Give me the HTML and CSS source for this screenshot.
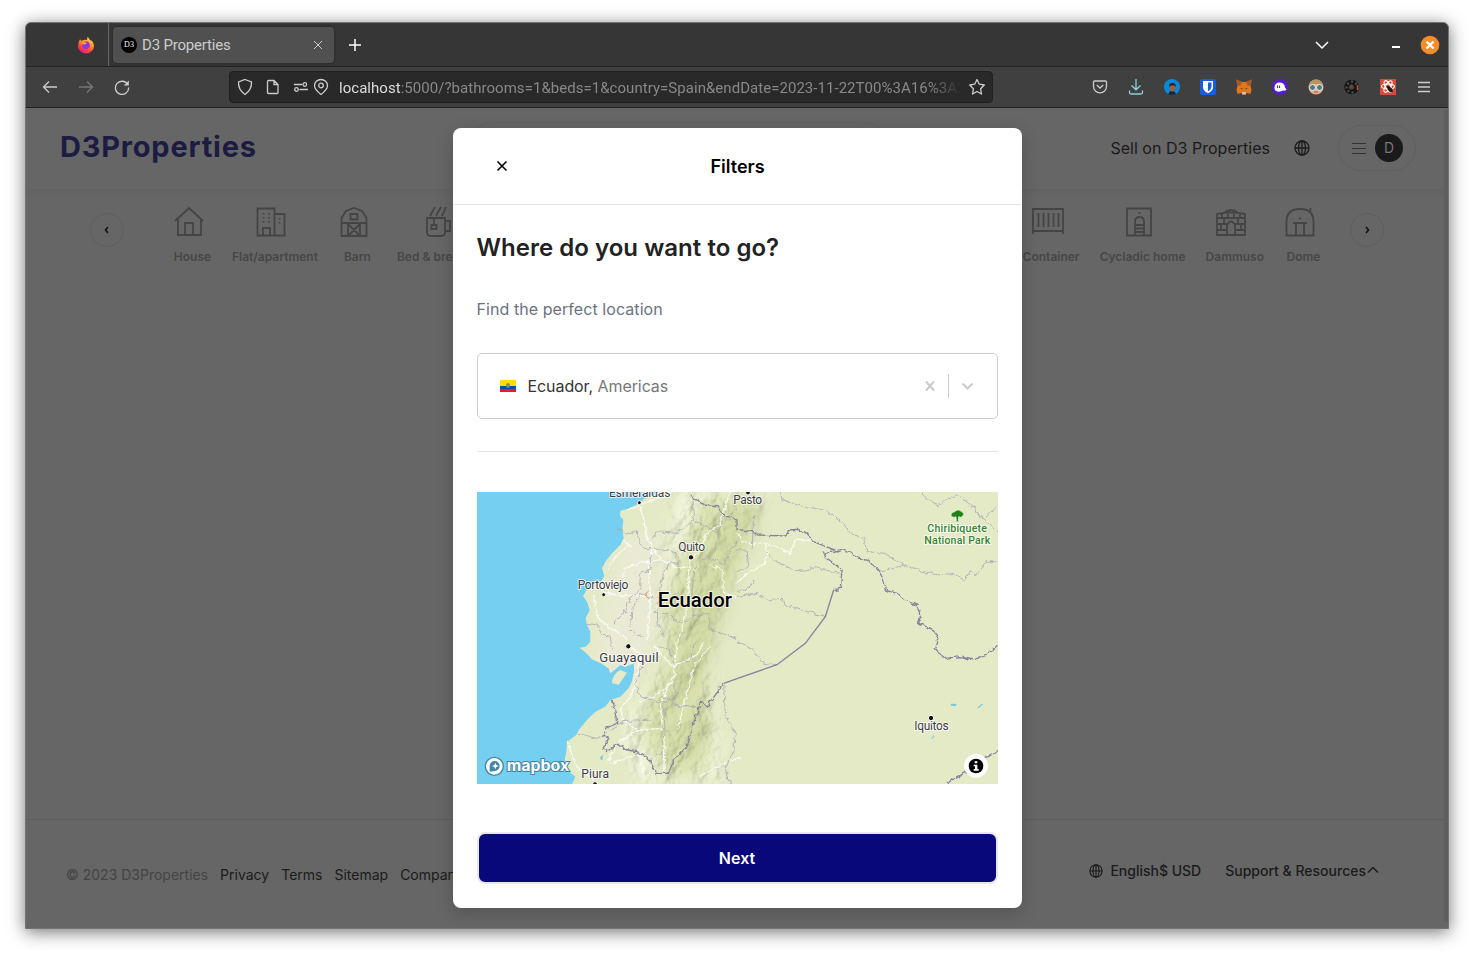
FILE: index.html
```html
<!DOCTYPE html>
<html lang="en">
<head>
<meta charset="utf-8">
<title>D3 Properties</title>
<link rel="stylesheet" href="styles.css">
</head>
<body>
<div class="window">
  <div class="tabbar">
    <div class="pinned">
      <svg width="18" height="18" viewBox="0 0 18 18">
        <defs><linearGradient id="fx" x1="0.8" y1="0" x2="0.3" y2="1"><stop offset="0" stop-color="#ffe545"/><stop offset=".45" stop-color="#ff8a28"/><stop offset=".75" stop-color="#ff3b47"/><stop offset="1" stop-color="#e5168c"/></linearGradient></defs>
        <path d="M3 3.2 4.5 5Q7 3 10 4L10.5.8Q12 2 13 4L15 5Q17 7 17 10A8 7.6 0 0 1 1 10Q1 6 3 3.2Z" fill="url(#fx)"/>
        <circle cx="9" cy="9.3" r="3.8" fill="#8a35e8"/><path d="M4.5 6.5Q8 5 10 7.5L7.5 8.5Q5.500 9 4.500 6.500Z" fill="#ffa52b"/>
      </svg>
    </div>
    <div class="tab">
      <span class="favicon">D3</span>
      <span class="tab-title">D3 Properties</span>
      <svg width="16" height="16" viewBox="0 0 16 16" class="ln thin"><path d="M4 4l8 8M12 4l-8 8"/></svg>
    </div>
    <svg class="ln plus" width="16" height="16" viewBox="0 0 16 16"><path d="M8 2v12M2 8h12"/></svg>
    <div class="controls">
      <svg class="ln chev" width="16" height="16" viewBox="0 0 16 16"><path d="M2 5l6 6 6-6"/></svg>
      <span class="minimize"></span>
      <svg width="20" height="20" viewBox="0 0 20 20"><circle cx="10" cy="10" r="9.300" fill="#f28d2c"/><path d="M6.500 6.500l7 7M13.500 6.500l-7 7" stroke="#fff" stroke-width="2.400"/></svg>
    </div>
  </div>
  <div class="navbar">
    <div class="nav-buttons">
      <svg class="ln" width="16" height="16" viewBox="0 0 16 16"><path d="M15 8H1.500M7 2.500L1.500 8 7 13.500"/></svg>
      <svg class="ln off" width="16" height="16" viewBox="0 0 16 16"><path d="M1 8h13.500M9 2.500L14.500 8 9 13.500"/></svg>
      <svg class="ln" width="16" height="16" viewBox="0 0 16 16"><path d="M13.700 5.500A6.600 6.600 0 1 0 14.600 8.500"/><path d="M14.800 1.500v5h-5z" fill="#ccc" stroke="none"/></svg>
    </div>
    <div class="urlbar">
      <svg class="ln shield" width="16" height="18" viewBox="0 0 16 18"><path d="M8 1.500L14.500 4Q15 11.500 8 16.500 1 11.500 1.500 4Z"/></svg>
      <svg class="ln doc" width="14" height="16" viewBox="0 0 14 16"><path d="M2.500 1.500h5.500l4 4v8q0 1-1 1h-8.500q-1 0-1-1v-11q0-1 1-1zM8 1.500v4h4"/></svg>
      <svg class="ln toggles" width="16" height="16" viewBox="0 0 16 16"><path d="M1 5.500h8M6.500 10.500H15"/><circle cx="11.800" cy="5.500" r="1.800"/><circle cx="3.500" cy="10.500" r="1.800"/></svg>
      <svg class="ln pin" width="16" height="18" viewBox="0 0 16 18"><path d="M8 16.500Q1.500 11.500 1.500 7.500a6.500 6 0 0 1 13 0Q14.500 11.500 8 16.500Z"/><circle cx="8" cy="7.500" r="2.300"/></svg>
      <span class="url"><b>localhost</b>:5000/?bathrooms=1&amp;beds=1&amp;country=Spain&amp;endDate=2023-11-22T00%3A16%3A2</span>
      <svg class="ln" width="18" height="18" viewBox="0 0 18 18"><path d="M9 1.500l2.300 4.700 5 .8-3.700 3.700.9 5.300L9 13.500 4.500 16l.9-5.300L1.700 7l5-.8z" stroke-linejoin="round"/></svg>
    </div>
    <div class="extensions">
      <span><svg class="ln" width="16" height="16" viewBox="0 0 16 16"><path d="M2.500 2h11q1 0 1 1v4.500a6.500 6.300 0 0 1-13 0V3q0-1 1-1z"/><path d="M4.800 6l3.200 3 3.200-3"/></svg></span>
      <span><svg class="ln teal" width="16" height="16" viewBox="0 0 16 16"><path d="M8 0v10.500M3.500 6.500L8 10.800l4.500-4.300M1.500 11.500v2q0 1.500 1.500 1.500h10q1.500 0 1.500-1.500v-2"/></svg></span>
      <span><svg width="16" height="16" viewBox="0 0 16 16"><circle cx="8" cy="8" r="8" fill="#0788d8"/><path d="M4.500 16Q4.500 12 8 12t4 3.500Z" fill="#20222c"/><ellipse cx="8.500" cy="8.800" rx="2.800" ry="3.700" fill="#9c5f42"/><path d="M5 8Q4.500 4 8.500 4T11.500 8L10.500 6.500H6.500Z" fill="#2e2021"/></svg></span>
      <span><svg width="16" height="16" viewBox="0 0 16 16"><rect width="16" height="16" rx="2" fill="#175ddc"/><path d="M3 2h10v6q0 4-5 6.300Q3 12 3 8z" fill="#fff"/><path d="M8 3.500h3.500V8q0 2.500-3.500 4.600z" fill="#175ddc"/></svg></span>
      <span><svg width="16" height="16" viewBox="0 0 16 16"><path d="M.5.500L6 3h4L15.500.5l-.8 7L15.500 11l-1 4-3.500-1-2 1.500H7L5 14l-3.500 1-1-4 .8-3.500z" fill="#e2761b"/><path d="M.5.500L6 3.500 4.500 6.500 1 7zM15.500.5L10 3.500l1.500 3L15 7z" fill="#a35a28"/><path d="M6 13h4v2.500H6z" fill="#d5bfb2"/><path d="M4 9l2.500.5V10.500zM12 9l-2.500.5V10.500z" fill="#2a3344"/></svg></span>
      <span><svg width="16" height="16" viewBox="0 0 16 16"><circle cx="8" cy="8" r="8" fill="#551bcf"/><path d="M2.500 9Q2.500 3.500 7.500 3.500T13 8.500l1.500 2Q14 12 11 11.500 8.500 13 5.500 12.500 2.500 12 2.500 9Z" fill="#fff"/><path d="M5.500 6.500v2.500M7.500 6.500v2.500" stroke="#4f22bd" stroke-width="1.100"/></svg></span>
      <span><svg width="16" height="16" viewBox="0 0 16 16"><circle cx="8" cy="8" r="7.500" fill="#e9b090"/><path d="M1 8Q1 .5 8 .5T15 8L12 5H4z" fill="#b79561"/><circle cx="4.500" cy="8.500" r="3" fill="#477b87" stroke="#e8efed"/><circle cx="11.500" cy="8.500" r="3" fill="#477b87" stroke="#e8efed"/><path d="M6 13h4" stroke="#a45742"/></svg></span>
      <span><svg width="16" height="16" viewBox="0 0 16 16"><circle cx="7.500" cy="8" r="5" fill="none" stroke="#141414" stroke-width="4.500"/><g fill="#4b4b4b"><circle cx="4" cy="4.500" r="1.200"/><circle cx="8" cy="2.500" r="1.200"/><circle cx="2.500" cy="8.500" r="1.200"/><circle cx="4.500" cy="12" r="1.200"/><circle cx="8.500" cy="13.500" r="1.200"/><circle cx="12" cy="4.500" r="1.200"/></g><circle cx="7.500" cy="8" r="1.500" fill="#7a421f"/><path d="M13.500 6v5" stroke="#b9552a" stroke-width="1.600"/></svg></span>
      <span><svg width="16" height="16" viewBox="0 0 16 16"><rect width="16" height="16" fill="#d94a38"/><g fill="none" stroke="#fff" stroke-width="1.100"><ellipse cx="8" cy="7.500" rx="6.500" ry="2.500"/><ellipse cx="8" cy="7.500" rx="6.500" ry="2.500" transform="rotate(60 8 7.500)"/><ellipse cx="8" cy="7.500" rx="6.500" ry="2.500" transform="rotate(120 8 7.500)"/></g><path d="M6.500 7l2.500 0 3.500 3 .5 3-2.500.5-2.500-2.500z" fill="#2a1515"/></svg></span>
      <span><svg class="ln" width="16" height="16" viewBox="0 0 16 16"><path d="M2 3.500h12M2 8h12M2 12.500h12"/></svg></span>
    </div>
  </div>

  <div class="page">
    <header class="site-header">
      <div class="logo">D3Properties</div>
      <div class="searchbar"></div>
      <div class="header-right">
        <span class="sell">Sell on D3 Properties</span>
        <svg class="globe" width="16" height="16" viewBox="0 0 16 16"><circle cx="8" cy="8" r="7"/><ellipse cx="8" cy="8" rx="3.500" ry="7"/><path d="M8 1v14M1 8h14"/></svg>
        <div class="user"><svg width="16" height="16" viewBox="0 0 16 16"><path d="M1 3.500h14M1 8.500h14M1 13.500h14" stroke="#333" stroke-width="1.200"/></svg><span class="avatar">D</span></div>
      </div>
    </header>
    <div class="categories">
      <span class="arrow"><svg width="10" height="10" viewBox="0 0 10 10"><path d="M6 2L3.500 5 6 8"/></svg></span>
      <div class="cats cats-start">
        <div class="cat"><svg viewBox="0 0 32 32"><path d="M2 15L16 2l14 13M5 13v16h23V13M12 29V17h8v12"/></svg>House</div>
        <div class="cat"><svg viewBox="0 0 32 32"><path d="M2.500 2.500h17v27h-17zM19.500 8h10v21.500h-10M8 29v-7h7v7"/><path stroke-dasharray="1.500 2.500" d="M8.500 7v12M14 7v12M24.500 12v8"/></svg>Flat/apartment</div>
        <div class="cat"><svg viewBox="0 0 32 32"><path d="M3.500 30V12L8 5l8-3 8 3 4.500 7v18zM3.500 17h25M12.500 8h7v5.500h-7zM10 17v13M22 17v13M10 18l12 12M22 18L10 30"/></svg>Barn</div>
        <div class="cat"><svg viewBox="0 0 32 32"><path d="M4 12h18v14q0 4-4 4H8q-4 0-4-4zM22 15h5v10h-5M11 12v7M8.500 19h5v4h-5zM7 10l5-9M13 10l5-9M19 10l4-9"/></svg>Bed &amp; breakfast</div>
      </div>
      <div class="cats cats-end">
        <div class="cat"><svg viewBox="0 0 32 32"><path d="M1 28V3h30v25M1 25h30M6.500 7v14M11.500 7v14M16.500 7v14M21.500 7v14M26.500 7v14"/></svg>Container</div>
        <div class="cat"><svg viewBox="0 0 32 32"><path d="M4 2.500h24v27H4zM12 29V16q0-5 4.500-5t4.500 5v13M12 19h9M12 22.500h9M12 26h9M16.500 6v2"/></svg>Cycladic home</div>
        <div class="cat"><svg viewBox="0 0 32 32"><path d="M2 29V8l7-1q7-6 14 0l7 1v21zM2 8q14-3 28 0M2 12h28M2 18h10M20 18h10M2 24h10M20 24h10M7 8v4M13 8v4M19 8v4M25 8v4M9 12v6M23 12v6M6 18v6M26 18v6M12 29V19q4-7 8 0v10"/></svg>Dammuso</div>
        <div class="cat"><svg viewBox="0 0 32 32"><path d="M2.500 29.500V16q0-13 13.500-13 13.500 0 13.500 13v13.500zM26.500 8V2M9 17h14M12 17v12M20 17v12M16 11.500v2"/></svg>Dome</div>
      </div>
      <span class="arrow"><svg width="10" height="10" viewBox="0 0 10 10"><path d="M4 2l2.500 3L4 8"/></svg></span>
    </div>
    <footer class="footer">
      <div class="links"><span class="copy">© 2023 D3Properties</span><span>Privacy</span><span>Terms</span><span>Sitemap</span><span>Company</span></div>
      <div class="locale">
        <svg class="globe" width="14" height="14" viewBox="0 0 16 16"><circle cx="8" cy="8" r="7"/><ellipse cx="8" cy="8" rx="3.500" ry="7"/><path d="M8 1v14M1 8h14"/></svg>
        <span class="lang">English$ USD</span><span class="support">Support &amp; Resources</span>
        <svg class="globe" width="12" height="14" viewBox="0 0 12 14"><path d="M1 8.500l5-5 5 5"/></svg>
      </div>
    </footer>
    <i class="scrollbar"></i>

    <div class="overlay">
      <section class="modal">
        <div class="modal-head">
          <svg class="close" width="12" height="12" viewBox="0 0 12 12"><path d="M1.500 1.500l9 9M10.500 1.500l-9 9"/></svg>
          <span class="filters">Filters</span>
        </div>
        <div class="modal-body">
          <h2>Where do you want to go?</h2>
          <p>Find the perfect location</p>
          <div class="select">
            <svg width="16" height="12" viewBox="0 0 16 12"><rect width="16" height="12" rx="1" fill="#ffdd00"/><path d="M0 6h16v6H0z" fill="#034ea2"/><path d="M0 9h16v2q0 1-1 1H1q-1 0-1-1z" fill="#ed1c24"/><ellipse cx="8" cy="5.500" rx="2" ry="2.500" fill="#8a8252"/><circle cx="8" cy="5.800" r="1" fill="#63aab5"/></svg>
            <span class="value">Ecuador, <em>Americas</em></span>
            <svg class="grey" width="12" height="12" viewBox="0 0 12 12"><path d="M2 1.500l8 9M10 1.500l-8 9"/></svg>
            <i class="sep"></i>
            <svg class="grey" width="14" height="12" viewBox="0 0 14 12"><path d="M1.500 3.500l5 5 5-5"/></svg>
          </div>
          <hr>
          <svg class="map" width="521" height="292" viewBox="0 6 1563 876">
            <defs>
              <filter id="relief" x="0" y="0" width="100%" height="100%">
                <feTurbulence type="fractalNoise" baseFrequency=".019 .014" numOctaves="4" seed="12" result="n"/>
                <feDiffuseLighting in="n" surfaceScale="14" lighting-color="#f3f5e2" diffuseConstant="1.150" result="l"><feDistantLight azimuth="205" elevation="60"/></feDiffuseLighting>
                <feGaussianBlur in="SourceAlpha" stdDeviation="24" result="a"/>
                <feComposite in="l" in2="a" operator="in"/>
              </filter>
              <filter id="soft" x="-20%" y="-20%" width="140%" height="140%"><feGaussianBlur stdDeviation="25"/></filter>
              <filter id="jag" x="-5%" y="-5%" width="110%" height="110%"><feTurbulence type="fractalNoise" baseFrequency=".07" numOctaves="2" seed="3"/><feDisplacementMap in="SourceGraphic" scale="16" xChannelSelector="R" yChannelSelector="G"/></filter>
              <clipPath id="land"><path id="coast" d="M560 0L500 28 487 40 457 55 430 63 429 78 439 90 436 120 440 145 430 165 405 190 385 215 375 235 382 258 372 275 335 290 318 318 330 335 338 360 326 385 330 405 340 425 340 455 326 470 308 473 328 490 345 508 372 520 395 535 400 550 430 525 445 530 470 520 472 540 465 575 455 595 430 620 400 630 385 650 355 665 330 690 305 720 298 735 270 755 268 785 263 810 270 840 295 860 285 882 1563 882V0Z"/></clipPath>
            </defs>
            <rect y="0" width="1563" height="882" fill="#75cff0"/>
            <use href="#coast" fill="#e4eac6"/>
            <g clip-path="url(#land)">
              <path d="M440 140L540 130 560 400 500 560 440 620 350 500Z" fill="#eaead4" filter="url(#soft)"/>
              <path d="M680 20H860L830 130 780 250 735 400 700 520 700 700 690 860H560L500 740 500 650 560 520 570 340 600 230Z" fill="#d9e0b4" filter="url(#soft)"/>
              <path d="M600 0H890L820 130 770 250 725 400 700 520 725 700 740 882H480L430 740 470 640 550 520 540 340 570 150Z" filter="url(#relief)" opacity=".58" class="multiply"/>
              <path d="M845 30L790 130 745 230 720 330 690 410 660 500 630 590M690 680L640 780" fill="none" stroke="#aebb75" stroke-width="36" opacity=".32" filter="url(#soft)"/>
            </g>
            <path d="M405 580Q405 552 430 540L450 548 435 570 425 584Z" fill="#e6eac9"/>
            <path d="M370 800l8-4-2 14-6-2z" fill="#6cc9ed"/>
            <g class="roads" filter="url(#jag)">
              <path d="M487 40L500 90 510 140 525 175 555 208 600 235 640 230M436 150L460 165 420 195 390 240M525 175L515 230 520 320 515 400 510 450M372 275L380 310 430 315 515 318M440 280L440 240 480 220 555 208M350 315L360 380 400 415 450 445M640 205L632 330 620 400 600 460 590 560 550 640 555 700M690 130L670 180 640 205M700 225L735 240 740 310 780 320M455 470L490 490 480 560 465 610 430 655 440 690 480 720 560 715M530 470L590 530 650 500 680 460M480 720L420 760 390 820M270 755L300 830 350 870M400 820L490 790 500 860M560 850L565 740"/>
              <path d="M780 130L805 160 865 160 870 185 865 220 810 250 780 280M870 160L940 188 955 150 1010 155M700 470L650 530 630 610 600 720M670 860L720 830 790 800M490 640L560 600 600 550M600 0L540 25 450 60M690 130L730 100 760 0"/>
            </g>
            <g class="minor" filter="url(#jag)">
              <path d="M410 119H436L445 135 480 122 485 150 500 175 580 180 610 205 605 225 580 218 560 245 545 320 540 400 560 440M525 145L540 125 600 130 650 90 645 30M520 195V240L490 250 488 300 455 330 440 370 410 400M650 240L645 310 650 380 610 400 570 370 530 370M650 90L690 110 720 130 740 90 780 60M330 400L360 405 375 435 400 440 405 480M465 360L490 310 530 325M465 360L460 420 500 440M545 470L580 480 590 520 640 510 660 450M500 520L475 580 490 620 560 640 565 740M560 640L600 620 590 580M520 690L440 695 420 705M560 740L550 790 520 810M300 733L360 745 420 710M650 240L690 200 740 220 780 150M645 380L690 370 700 420 780 445M660 650L610 650 560 620M740 580L745 670 775 730 770 790 745 830 760 882"/>
              <path d="M830 80L825 180M910 0V25L960 45 1040 60 1090 90 1120 130 1160 145 1170 185 1220 190 1280 225 1340 245 1385 255 1430 250 1460 270 1480 245 1500 255 1525 215H1563M1330 0L1345 25 1385 45 1410 25 1440 15 1480 40 1510 80 1563 125M1525 80L1563 48M1205 245L1280 226M780 456L830 480 860 520 900 524M865 185L890 210 950 240 995 245 1000 230 1090 250M780 310L820 290 830 270M780 320L840 310 870 330 915 325 920 345 1045 380M780 180L810 180 815 230 780 245"/>
            </g>
            <g class="borders">
              <path filter="url(#jag)" d="M640 15L680 45 720 50 740 75 780 90 780 118 830 125 840 135 930 138 935 120 960 118 990 130 1010 155 1085 185 1040 190 1045 200 1095 240 1090 295 1070 300M740 580L690 650 670 635 650 700 630 770 590 810 575 850 540 850 510 800 480 785 450 780 420 760 390 785 378 775 395 745 378 730 385 715 420 700 410 640 400 633M1085 185L1100 178 1150 205 1170 210 1200 235 1215 260 1225 300 1260 310 1280 330 1320 345 1330 380 1325 400 1370 420 1385 450 1375 475 1385 490 1405 505 1450 500 1490 510 1530 495 1545 480 1563 465M1410 882L1430 865 1470 845 1520 805 1563 785"/>
              <path d="M1070 300L1045 380 985 460 900 524 780 566 740 580"/>
            </g>
            <path d="M1422 641l17 1-2 5-14 1zM1500 655l14-13 5 0-13 12zM1360 740l5 5 6-13v8l-6 7z" fill="#6cc9ed"/>
            <path d="M515 305l-7 3-2 10 10 8" fill="none" stroke="#ee9b55" stroke-width="3"/>
            <g fill="#111" stroke="#fff" stroke-width="3"><circle cx="487" cy="38" r="6"/><circle cx="642" cy="202" r="8"/><circle cx="380" cy="314" r="6"/><circle cx="454" cy="469" r="8"/><circle cx="354" cy="882" r="7"/><circle cx="813" cy="8" r="7"/><circle cx="1362" cy="684" r="8"/></g>
            <g class="labels">
              <text x="396" y="21" textLength="184">Esmeraldas</text>
              <text x="769" y="42" textLength="86">Pasto</text>
              <text x="604" y="183" textLength="80">Quito</text>
              <text x="302" y="298" textLength="152">Portoviejo</text>
              <text class="city" x="367" y="516" textLength="178">Guayaquil</text>
              <text x="313" y="863" textLength="83">Piura</text>
              <text x="1312" y="721" textLength="103">Iquitos</text>
              <text class="country" x="542" y="350" textLength="223" lengthAdjust="spacingAndGlyphs">Ecuador</text>
              <g class="park"><text x="1351" y="127" textLength="179">Chiribiquete</text><text x="1342" y="163" textLength="198">National Park</text></g>
            </g>
            <path d="M1422 76Q1422 66 1433 65 1443 55 1452 64 1464 68 1458 78 1450 85 1445 80L1444 92 1449 95H1433L1438 92 1437 80Q1426 85 1422 76Z" fill="#218017" stroke="#f3f6df" stroke-width="2"/>
            <circle cx="52" cy="829" r="27" fill="#fff" fill-opacity=".95" stroke="#4385a3" stroke-width="4"/>
            <path d="M38 845V828a15 15 0 1 1 15 15z" fill="#4385a3"/><path d="M55 818l3 7 7 3-7 3-3 7-3-7-7-3 7-3z" fill="#fff"/>
            <text class="mapbox" x="89" y="843" textLength="188" lengthAdjust="spacingAndGlyphs">mapbox</text>
            <circle cx="1497" cy="827" r="36" fill="#fff" fill-opacity=".93"/><circle cx="1497" cy="828" r="22"/>
            <path d="M1493 814h8v6h-8zM1490 824h11v13h4v5h-15v-5h4v-8h-4z" fill="#fff"/>
          </svg>
          <button class="next">Next</button>
        </div>
      </section>
    </div>
  </div>
</div>
</body>
</html>
```

FILE: styles.css
```css
* { box-sizing: border-box; }
body { margin: 0; padding: 22px 25px; background: #fff; font-family: Inter, sans-serif; }
svg { display: block; flex: none; }
.window { width: 1424px; height: 907px; display: flex; flex-direction: column; border: 1px solid #747474; border-radius: 6px 6px 0 0; overflow: hidden; background: #666; box-shadow: 0 3px 17px rgba(0, 0, 0, .55); }
.ln { fill: none; stroke: #ccc; stroke-width: 1.3; }
.ln.off { stroke: #777; }
.ln.teal { stroke: #8bd5d6; }
.ln.thin { stroke-width: 1; }

.tabbar { height: 44px; flex: none; display: flex; align-items: center; background: #363636; border-bottom: 1px solid #222; font-family: Roboto, sans-serif; }
.pinned { width: 83px; height: 43px; padding: 13px 0 0 51px; border-right: 1px solid #666; }
.tab { width: 221px; height: 36px; margin-left: 4px; padding: 0 8px; display: flex; align-items: center; border-radius: 4px; background: #505050; box-shadow: 0 0 3px #222; }
.favicon { width: 16px; height: 16px; border-radius: 50%; background: #000; color: #fff; font: 8px/16px "Liberation Serif", serif; text-align: center; }
.tab-title { flex: 1; padding-left: 5px; font-size: 15px; color: #ccc; letter-spacing: -.2px; }
.plus { margin-left: 13px; stroke: #fff; stroke-width: 1.5; }
.controls { margin-left: auto; padding-right: 8px; display: flex; align-items: center; }
.chev { stroke: #fff; stroke-width: 1.5; }
.minimize { width: 8px; height: 2px; margin: 5px 20px 0 62px; background: #fff; }

.navbar { height: 41px; flex: none; display: flex; align-items: center; background: #404040; border-bottom: 1px solid #222; }
.nav-buttons { display: flex; gap: 20px; padding-left: 16px; }
.urlbar { width: 764px; height: 32px; margin-left: 99px; padding: 0 6px 0 7px; display: flex; align-items: center; border: 1px solid #202020; border-radius: 4px; background: #292929; font-family: Roboto, sans-serif; font-size: 15px; }
.doc { margin-left: 13px; }
.toggles { margin-left: 13px; }
.pin { margin-left: 4px; }
.url { flex: 1; margin: 1px 6px 0 10px; overflow: hidden; white-space: nowrap; color: #888; letter-spacing: .04px; -webkit-mask-image: linear-gradient(90deg, #000 590px, transparent 622px); mask-image: linear-gradient(90deg, #000 590px, transparent 622px); }
.url b { font-weight: 400; color: #ddd; }
.extensions { margin-left: auto; padding-right: 6px; display: flex; }
.extensions span { width: 36px; display: flex; justify-content: center; }

.page { position: relative; flex: 1; display: flex; flex-direction: column; background: #666; }
.site-header { height: 81px; flex: none; display: flex; align-items: center; padding: 0 32px 2px 34px; box-shadow: 0 5px 8px -2px rgba(0, 0, 0, .05); }
.logo { width: 300px; padding-bottom: 2px; font-size: 29px; font-weight: 700; letter-spacing: .8px; color: #1c1b42; }
.searchbar { width: 420px; height: 50px; margin: 0 0 2px 108px; border: 1px solid #616161; border-radius: 25px; }
.header-right { margin-left: auto; display: flex; align-items: center; }
.sell { font-size: 16px; color: #1b1b1b; letter-spacing: .02px; }
.globe { fill: none; stroke: #1b1b1b; stroke-width: 1.3; }
.header-right .globe { margin: 0 28px 0 24px; }
.user { width: 78px; height: 46px; padding: 0 12px; display: flex; align-items: center; justify-content: space-between; border: 1px solid #606060; border-radius: 23px; }
.avatar { width: 28px; height: 28px; border-radius: 50%; background: #1a1a1a; color: #777; font-size: 14px; line-height: 28px; text-align: center; }

.categories { height: 82px; flex: none; padding: 0 64px; display: flex; align-items: center; }
.arrow { width: 34px; height: 34px; display: grid; place-items: center; border: 1px solid #5e5e5e; border-radius: 50%; }
.arrow svg { fill: none; stroke: #111; stroke-width: 1.6; }
.cats { display: flex; gap: 20px; padding-top: 11px; }
.cats-start { width: 281px; margin-left: 49px; overflow: hidden; }
.cats-end { margin: 0 27px 0 auto; }
.cat { flex: none; display: flex; flex-direction: column; align-items: center; gap: 11px; font-size: 12px; line-height: 16px; font-weight: 600; color: #474747; white-space: nowrap; }
.cat svg { width: 32px; height: 32px; margin-right: 7px; fill: none; stroke: #444; stroke-width: 1.8; }

.footer { height: 109px; margin-top: auto; flex: none; padding: 0 69px 0 40px; display: flex; justify-content: space-between; align-items: center; border-top: 1px solid #5d5d5d; font-size: 14px; color: #1b1b1b; }
.links { display: flex; gap: 12px; padding-top: 1px; }
.copy { color: #444; }
.locale { display: flex; align-items: center; padding-bottom: 7px; font-weight: 500; }
.lang { margin: 0 24px 0 7px; }
.support { margin-right: 1px; }
.scrollbar { position: absolute; top: 2px; right: 0; width: 4px; height: 812px; background: #5e5e5e; }

.overlay { position: absolute; inset: 0; display: grid; place-items: center; }
.modal { width: 569px; height: 780px; border-radius: 8px; background: #fff; box-shadow: 0 5px 18px rgba(0, 0, 0, .18); }
.modal-head { height: 77px; display: flex; align-items: center; border-bottom: 1px solid #e5e5e8; }
.close { margin-left: 43px; stroke: #000; stroke-width: 1.6; }
.filters { flex: 1; padding-right: 54px; text-align: center; font-size: 18px; font-weight: 600; }
.modal-body { padding: 24px; display: flex; flex-direction: column; }
h2 { margin: 3px 0 0; font-size: 24px; line-height: 32px; font-weight: 600; letter-spacing: .03px; color: #222; }
p { margin: 33px 0 0; font-size: 16px; line-height: 24px; letter-spacing: .07px; color: #6b7280; }
.select { height: 66px; margin-top: 32px; padding: 0 22px; display: flex; align-items: center; border: 1px solid #ccc; border-radius: 5px; font-size: 16px; color: #333; }
.value { flex: 1; padding-left: 12px; letter-spacing: -.08px; }
.value em { font-style: normal; color: #777; }
.grey { fill: none; stroke: #ccc; stroke-width: 2.2; }
.sep { width: 1px; height: 24px; margin: 0 12px; background: #ccc; }
hr { width: 100%; height: 1px; margin: 32px 0 0; border: 0; background: #e5e5e5; }
.map { margin-top: 40px; }
.multiply { mix-blend-mode: multiply; }
.roads { fill: none; stroke: #fff; stroke-width: 4; opacity: .8; }
.minor { fill: none; stroke: #aaa7b7; stroke-width: 3; opacity: .8; }
.borders { fill: none; stroke: #85829c; stroke-width: 4; }
.labels { font-family: Roboto, sans-serif; font-size: 36px; fill: #3c3c43; stroke: #fff; stroke-width: 6; stroke-opacity: .75; stroke-linejoin: round; paint-order: stroke; }
.city { font-size: 39px; }
.country { font-size: 62px; font-weight: 500; fill: #000; }
.park { font-size: 32px; font-weight: 500; fill: #35852c; }
.mapbox { font-family: Inter, sans-serif; font-size: 47px; font-weight: 700; fill: #fff; stroke: #4385a3; stroke-width: 6; paint-order: stroke; }
.next { height: 52px; margin-top: 48px; border: 2px solid #e5e7eb; border-radius: 8px; background: #08087a; color: #fff; font: 600 16px Inter, sans-serif; }
```
